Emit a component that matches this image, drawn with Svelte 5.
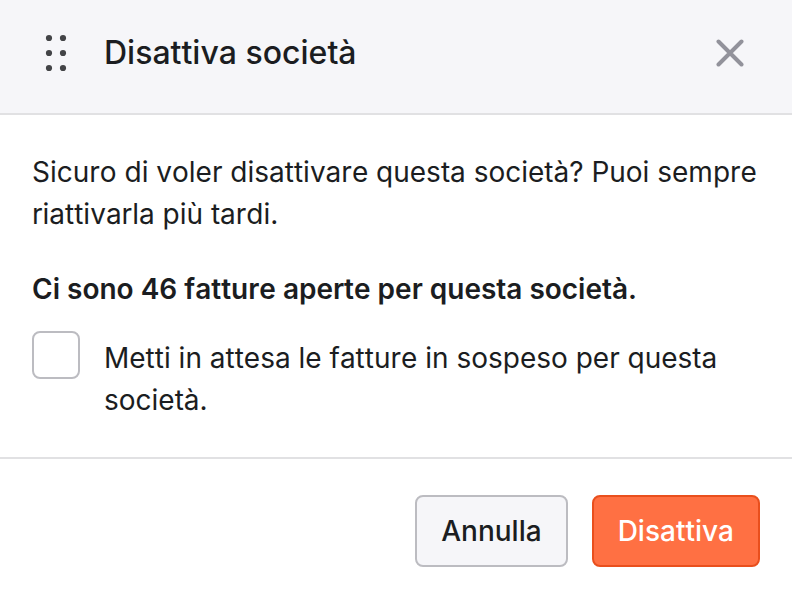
<script>
  let { customer = "società", openInvoices = 46 } = $props();
  let holdInvoices = $state(false);

  const dots = [7, 22, 37].flatMap((y) => [17, 31].map((x) => ({ x, y })));
</script>

<div class="dialog" role="dialog" aria-labelledby="dialog-title">
  <header>
    <svg class="handle" viewBox="0 0 48 44" aria-hidden="true">
      {#each dots as dot}
        <circle cx={dot.x} cy={dot.y} r="3.1" />
      {/each}
    </svg>
    <h1 id="dialog-title">Disattiva {customer}</h1>
    <button class="close" type="button" aria-label="Chiudi">
      <svg viewBox="0 0 28 28" aria-hidden="true">
        <path d="M2.5 2.5 25.5 25.5M25.5 2.5 2.5 25.5" />
      </svg>
    </button>
  </header>

  <div class="body">
    <p>Sicuro di voler disattivare questa {customer}? Puoi sempre riattivarla più tardi.</p>
    <p class="warning">Ci sono {openInvoices} fatture aperte per questa {customer}.</p>
    <label>
      <input type="checkbox" bind:checked={holdInvoices} />
      <span>Metti in attesa le fatture in sospeso per questa {customer}.</span>
    </label>
  </div>

  <footer>
    <button class="btn" type="button">Annulla</button>
    <button class="btn primary" type="button">Disattiva</button>
  </footer>
</div>

<style>
  :global(body) { background: #fff; }
  .dialog { font-family: Inter, "Liberation Sans", sans-serif; font-size: 28px; line-height: 42px; font-kerning: none; color: #1b1d21; }
  header { display: flex; align-items: center; gap: 24px; padding: 31px 32px 38px; background: #f6f6f9; border-bottom: 2px solid #e1e1e3; }
  .handle { width: 48px; height: 44px; flex-shrink: 0; fill: #434447; }
  h1 { flex: 1; margin: 0; font-size: 32px; line-height: 44px; font-weight: 500; }
  .close { display: flex; padding: 0; margin-right: 16px; border: 0; background: none; cursor: pointer; }
  .close svg { width: 28px; height: 28px; fill: none; stroke: #92929b; stroke-width: 4; stroke-linecap: round; }
  .body { padding: 36px 32px; }
  p { margin: 0; }
  .warning { margin-top: 33px; font-weight: 600; }
  label { display: flex; align-items: flex-start; gap: 24px; margin-top: 21px; }
  label span { padding-top: 6px; }
  input { appearance: none; box-sizing: border-box; flex-shrink: 0; width: 48px; height: 48px; margin: 0; border: 2px solid #bcbcc1; border-radius: 8px; background: #fff; }
  input:checked { background: #ff7043; border-color: #e94f1d; }
  footer { display: flex; justify-content: flex-end; gap: 24px; padding: 36px 32px; border-top: 2px solid #e1e1e3; }
  .btn { height: 72px; padding: 0 24px; border: 2px solid #bcbcc1; border-radius: 8px; background: #f6f6f9; color: #1b1d21; font: inherit; font-weight: 500; font-kerning: none; cursor: pointer; }
  .btn.primary { border-color: #e94f1d; background: #ff7043; color: #fff; }
</style>
